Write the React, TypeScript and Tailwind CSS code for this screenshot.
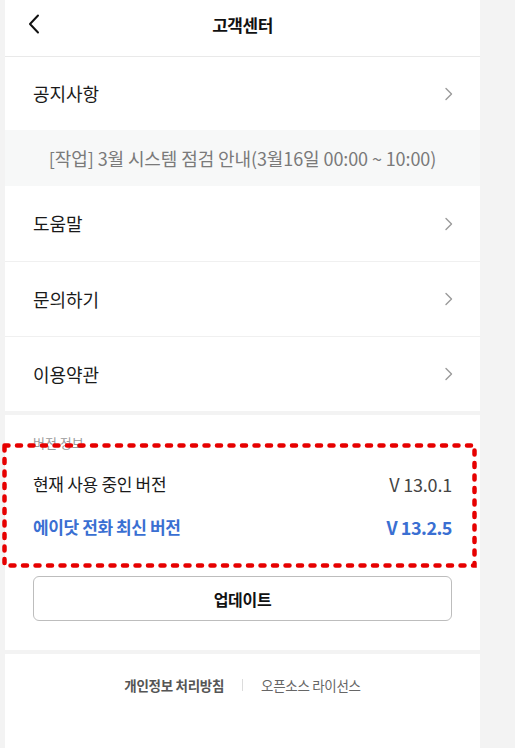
import React from "react";

const font = { fontFamily: '"Noto Sans CJK KR", "Noto Sans", sans-serif' };

function Chevron() {
  return (
    <svg width="10" height="14" viewBox="0 0 10 14" fill="none">
      <path d="M3 1.5 L8.5 7 L3 12.5" stroke="#9a9a9a" strokeWidth="1.4" strokeLinecap="round" strokeLinejoin="round" />
    </svg>
  );
}

function MenuRow({ label, border = true }: { label: string; border?: boolean }) {
  return (
    <div className={`flex h-[75px] items-center justify-between pl-[28px] pr-[27px] ${border ? "border-t border-[#f0f0f0]" : ""}`}>
      <span className="text-[18px] tracking-[-0.1px] text-[#1a1a1a]">{label}</span>
      <Chevron />
    </div>
  );
}

export default function App() {
  return (
    <div className="flex min-h-[748px] bg-[#f3f3f3] pl-[5px]" style={font}>
      <div className="flex w-[475px] flex-col bg-white">
        {/* Header */}
        <div className="relative flex h-[57px] items-center justify-center border-b border-[#e9e9e9] pb-[6px]">
          <div className="absolute left-[22px] top-[14px]">
            <svg width="16" height="20" viewBox="0 0 16 20" fill="none">
              <path d="M11 1.5 L3 10 L11 18.5" stroke="#111" strokeWidth="2" strokeLinecap="round" strokeLinejoin="round" />
            </svg>
          </div>
          <span className="text-[17px] font-bold tracking-[-0.5px] text-[#111]">고객센터</span>
        </div>

        <div className="flex h-[73px] items-center justify-between pl-[28px] pr-[27px]">
          <span className="text-[18px] tracking-[-0.1px] text-[#1a1a1a]">공지사항</span>
          <Chevron />
        </div>
        <div className="flex h-[56px] items-center justify-center bg-[#f7f8f8]">
          <span className="text-[18px] tracking-[-0.1px] text-[#7a7a7a]">[작업] 3월 시스템 점검 안내(3월16일 00:00 ~ 10:00)</span>
        </div>
        <MenuRow label="도움말" border={false} />
        <MenuRow label="문의하기" />
        <MenuRow label="이용약관" />
        <div className="h-[4px] bg-[#f3f3f3]" />

        {/* Version section */}
        <div className="relative flex flex-col px-[28px] pt-[19px]">
          <span className="text-[13px] leading-[18px] text-[#9a9a9a]">버전 정보</span>
          <div className="mt-[20px] flex h-[24px] items-center justify-between">
            <span className="text-[17px] tracking-[-0.3px] text-[#1a1a1a]">현재 사용 중인 버전</span>
            <span className="text-[18px] tracking-[-0.2px] text-[#444]">V 13.0.1</span>
          </div>
          <div className="mt-[19px] flex h-[24px] items-center justify-between">
            <span className="text-[17px] font-semibold tracking-[-0.4px] text-[#3a6fd2]">에이닷 전화 최신 버전</span>
            <span className="text-[18px] font-semibold tracking-[-0.5px] text-[#3a6fd2]">V 13.2.5</span>
          </div>
          <button className="mt-[37px] flex h-[45px] items-center justify-center rounded-[6px] border border-[#bdbdbd] bg-white">
            <span className="text-[16px] font-bold tracking-[-0.3px] text-[#111]">업데이트</span>
          </button>
          <div className="h-[29px]" />
          <svg className="pointer-events-none absolute left-[-3px] top-[28px]" width="476" height="126" viewBox="0 0 476 126" fill="none">
            <rect x="2.5" y="2.5" width="470" height="120" stroke="#e60000" strokeWidth="4.5" strokeDasharray="4 8.5" strokeLinecap="round" />
          </svg>
        </div>
        <div className="h-[4px] bg-[#f3f3f3]" />

        {/* Footer */}
        <div className="flex items-center justify-center pt-[21px]">
          <span className="text-[13.5px] font-semibold tracking-[-0.3px] text-[#555]">개인정보 처리방침</span>
          <span className="mx-[18px] h-[12px] w-px bg-[#dcdcdc]" />
          <span className="text-[13.5px] tracking-[-0.3px] text-[#666]">오픈소스 라이선스</span>
        </div>
      </div>
    </div>
  );
}
